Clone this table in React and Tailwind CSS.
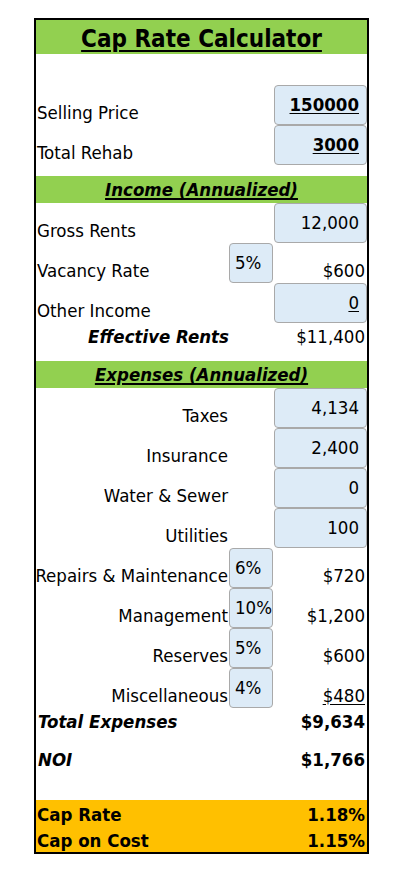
import React from 'react';

const font = { fontFamily: '"DejaVu Sans Condensed", "DejaVu Sans", sans-serif' };

const Box = ({ children, className = '' }) => (
  <div
    className={`h-[40px] rounded-[4px] border border-[#a9a9a9] bg-[#ddebf7] pt-[10px] pr-[7px] text-right leading-none ${className}`}
  >
    {children}
  </div>
);

const PctBox = ({ value }) => (
  <div className="h-[40px] w-[44px] rounded-[4px] border border-[#a9a9a9] bg-[#ddebf7] pt-[10px] pl-[5px] leading-none whitespace-nowrap">
    {value}
  </div>
);

const Band = ({ children }) => (
  <div className="flex h-[27px] items-start justify-center bg-[#92d050] pt-[5px] leading-none">
    <span className="font-bold italic underline decoration-[1.5px] underline-offset-[2px]">{children}</span>
  </div>
);

const InputRow = ({ label, value, bold, underline, right = false }) => (
  <div className="grid h-[40px] grid-cols-[193px_45px_93px]">
    <div
      className={`flex items-end pb-[3px] leading-none ${right ? 'justify-end pr-[1px]' : 'pl-[1px]'}`}
    >
      {label}
    </div>
    <div />
    <Box className={bold ? 'font-bold' : ''}>
      <span className={underline ? 'underline underline-offset-[2px]' : ''}>{value}</span>
    </Box>
  </div>
);

const PctRow = ({ label, pct, amount, underline, right = false }) => (
  <div className="grid h-[40px] grid-cols-[193px_45px_93px]">
    <div
      className={`flex items-end pb-[3px] leading-none whitespace-nowrap ${right ? 'justify-end pr-[1px]' : 'pl-[1px]'}`}
    >
      {label}
    </div>
    <PctBox value={pct} />
    <div className="flex items-end justify-end pb-[3px] pr-[2px] leading-none">
      <span className={underline ? 'underline underline-offset-[2px]' : ''}>{amount}</span>
    </div>
  </div>
);

export default function App() {
  return (
    <div className="min-h-[883px] bg-white text-[18.5px] text-black" style={font}>
      <div className="ml-[34px] pt-[18px]">
        <div className="w-[335px] border-2 border-black">
          <div className="flex h-[34px] items-start justify-center bg-[#92d050] pt-[7px] leading-none">
            <span className="text-[24px] font-bold underline decoration-2 underline-offset-[3px]">
              Cap Rate Calculator
            </span>
          </div>

          <div className="h-[31px]" />
          <InputRow label="Selling Price" value="150000" bold underline />
          <InputRow label="Total Rehab" value="3000" bold underline />
          <div className="h-[11px]" />

          <Band>Income (Annualized)</Band>
          <InputRow label="Gross Rents" value="12,000" />
          <PctRow label="Vacancy Rate" pct="5%" amount="$600" />
          <InputRow label="Other Income" value="0" underline />
          <div className="grid h-[38px] grid-cols-[193px_138px] pt-[5px] leading-none">
            <div className="text-right font-bold italic">Effective Rents</div>
            <div className="pr-[2px] text-right">$11,400</div>
          </div>

          <Band>Expenses (Annualized)</Band>
          <InputRow label="Taxes" value="4,134" right />
          <InputRow label="Insurance" value="2,400" right />
          <InputRow label="Water & Sewer" value="0" right />
          <InputRow label="Utilities" value="100" right />
          <PctRow label="Repairs & Maintenance" pct="6%" amount="$720" right />
          <PctRow label="Management" pct="10%" amount="$1,200" right />
          <PctRow label="Reserves" pct="5%" amount="$600" right />
          <PctRow label="Miscellaneous" pct="4%" amount="$480" underline right />

          <div className="flex h-[40px] justify-between pt-[5px] pl-[2px] pr-[2px] leading-none">
            <span className="font-bold italic">Total Expenses</span>
            <span className="font-bold">$9,634</span>
          </div>
          <div className="flex h-[52px] justify-between pt-[3px] pl-[2px] pr-[2px] leading-none">
            <span className="font-bold italic">NOI</span>
            <span className="font-bold">$1,766</span>
          </div>

          <div className="bg-[#ffc000] pl-[1px] pr-[2px] font-bold leading-none">
            <div className="flex h-[26px] justify-between pt-[6px]">
              <span>Cap Rate</span>
              <span>1.18%</span>
            </div>
            <div className="flex h-[26px] justify-between pt-[6px]">
              <span>Cap on Cost</span>
              <span>1.15%</span>
            </div>
          </div>
        </div>
      </div>
    </div>
  );
}
